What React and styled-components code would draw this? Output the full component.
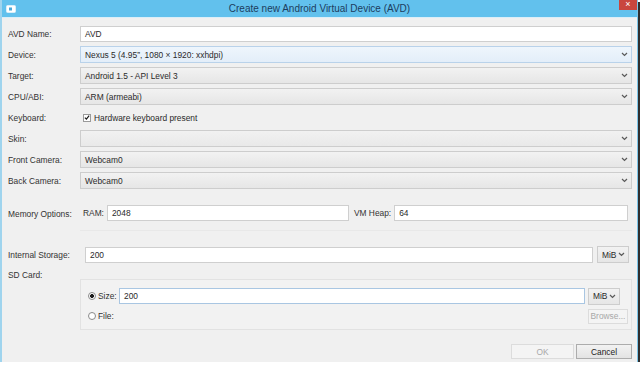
import React from 'react';
import styled, { createGlobalStyle, css } from 'styled-components';

// ---------------------------------------------------------------
// Global
// ---------------------------------------------------------------
const GlobalStyle = createGlobalStyle`
  html, body {
    margin: 0;
    padding: 0;
    background: #ffffff;
  }
  body {
    font-family: "Liberation Sans", Arial, sans-serif;
    font-size: 8.4px;
    color: #2e2e2e;
  }
`;

const Chevron = () => (
  <svg width="7" height="5" viewBox="0 0 7 5">
    <path d="M1 1 L3.5 3.5 L6 1" fill="none" stroke="#5a5a5a" strokeWidth="1.2" />
  </svg>
);

const AppIcon = () => (
  <svg width="10" height="8" viewBox="0 0 10 8">
    <rect x="0.5" y="0.5" width="9" height="7" rx="1" fill="#ffffff" stroke="#d9eef9" />
    <rect x="3" y="2.5" width="3" height="3" fill="#4aa8d8" />
  </svg>
);

const Select = ({ value, focused, disabled, width }) => (
  <SelectBox $focused={focused} $disabled={disabled} $width={width}>
    <span>{value}</span>
    <Chevron />
  </SelectBox>
);

const App = () => {
  return (
    <>
      <GlobalStyle />
      <Window>
        <TitleBar>
          <IconSlot>
            <AppIcon />
          </IconSlot>
          <Title>Create new Android Virtual Device (AVD)</Title>
          <CloseButton>×</CloseButton>
        </TitleBar>

        <Body>
          <Rows>
            <Row>
              <Label>AVD Name:</Label>
              <TextInput>AVD</TextInput>
            </Row>
            <Row>
              <Label>Device:</Label>
              <Select value="Nexus 5 (4.95”, 1080 × 1920: xxhdpi)" focused />
            </Row>
            <Row>
              <Label>Target:</Label>
              <Select value="Android 1.5 - API Level 3" />
            </Row>
            <Row>
              <Label>CPU/ABI:</Label>
              <Select value="ARM (armeabi)" />
            </Row>
            <Row>
              <Label>Keyboard:</Label>
              <Check>
                <CheckBox>
                  <svg width="7" height="7" viewBox="0 0 7 7">
                    <path d="M1 3.6 L2.8 5.4 L6 1.2" fill="none" stroke="#1c1c1c" strokeWidth="1.4" />
                  </svg>
                </CheckBox>
                Hardware keyboard present
              </Check>
            </Row>
            <Row>
              <Label>Skin:</Label>
              <Select value="" disabled />
            </Row>
            <Row>
              <Label>Front Camera:</Label>
              <Select value="Webcam0" />
            </Row>
            <Row>
              <Label>Back Camera:</Label>
              <Select value="Webcam0" />
            </Row>
          </Rows>

          <MemoryRow>
            <Label>Memory Options:</Label>
            <Panel>
              <InlineLabel>RAM:</InlineLabel>
              <TextInput $width="242px">2048</TextInput>
              <InlineLabel $gap="5px">VM Heap:</InlineLabel>
              <TextInput>64</TextInput>
            </Panel>
          </MemoryRow>

          <StorageRow>
            <Label>Internal Storage:</Label>
            <Inline>
              <TextInput>200</TextInput>
              <Select value="MiB" width="32px" />
            </Inline>
          </StorageRow>

          <SdRow>
            <Label $top>SD Card:</Label>
            <GroupBox>
              <GroupLine>
                <Radio $checked />
                <RadioLabel>Size:</RadioLabel>
                <TextInput $focused>200</TextInput>
                <Select value="MiB" width="32px" />
                <Spacer />
              </GroupLine>
              <GroupLine>
                <Radio />
                <RadioLabel>File:</RadioLabel>
                <FileFill />
                <Button $disabled $width="40px">Browse...</Button>
              </GroupLine>
            </GroupBox>
          </SdRow>

          <Footer>
            <Button $disabled $width="63px">OK</Button>
            <Button $width="56px">Cancel</Button>
          </Footer>
        </Body>
      </Window>
    </>
  );
};

// ---------------------------------------------------------------
// Styled Components
// ---------------------------------------------------------------
const Window = styled.div`
  width: 638px;
  height: 362px;
  box-sizing: border-box;
  background: #f0f0f0;
  border-left: 2px solid #9fd4ee;
  border-right: 1px solid #7cc6ea;
  box-shadow: 2px 2px 0 #2f2f2f;
  display: flex;
  flex-direction: column;
  overflow: hidden;
`;

const TitleBar = styled.div`
  height: 17px;
  flex: none;
  background: #62c1ed;
  display: flex;
  align-items: center;
  position: relative;
  border-bottom: 1px solid #dbeef8;
`;

const IconSlot = styled.div`
  width: 10px;
  height: 8px;
  margin-left: 4px;
  display: flex;
`;

const Title = styled.div`
  flex: 1;
  text-align: center;
  font-size: 10px;
  color: #1d3d5e;
  padding-right: 14px;
`;

const CloseButton = styled.div`
  position: absolute;
  right: 0;
  top: 0;
  width: 18px;
  height: 10px;
  background: #c9463e;
  color: #ffffff;
  font-size: 9px;
  line-height: 9px;
  text-align: center;
`;

const Body = styled.div`
  flex: 1;
  padding: 7px 5px 0 6px;
  display: flex;
  flex-direction: column;
`;

const Rows = styled.div`
  display: flex;
  flex-direction: column;
  gap: 4px;
`;

const rowGrid = css`
  display: grid;
  grid-template-columns: 72px 1fr;
  align-items: center;
`;

const Row = styled.div`
  ${rowGrid};
  height: 17px;
`;

const Label = styled.div`
  white-space: nowrap;
  color: #333333;
  ${(p) => p.$top && 'align-self: start; line-height: 17px;'}
`;

const TextInput = styled.div`
  height: 16px;
  box-sizing: border-box;
  flex: ${(p) => (p.$width ? `none` : '1')};
  width: ${(p) => p.$width || 'auto'};
  background: #ffffff;
  border: 1px solid ${(p) => (p.$focused ? '#a9c6e2' : '#cfcfcf')};
  padding: 0 4px;
  display: flex;
  align-items: center;
  color: #2a2a2a;
`;

const SelectBox = styled.div`
  height: 17px;
  box-sizing: border-box;
  flex: ${(p) => (p.$width ? 'none' : '1')};
  width: ${(p) => p.$width || 'auto'};
  border: 1px solid ${(p) => (p.$focused ? '#b9d2ea' : '#cdcdcd')};
  background: ${(p) =>
    p.$focused
      ? 'linear-gradient(#eef5fc, #e3eef9)'
      : p.$disabled
      ? 'linear-gradient(#f1f1f1, #e9e9e9)'
      : 'linear-gradient(#f2f2f2, #e6e6e6)'};
  display: flex;
  align-items: center;
  justify-content: space-between;
  padding: 0 3px 0 4px;
  color: #2a2a2a;
  white-space: nowrap;
`;

const Check = styled.div`
  display: flex;
  align-items: center;
  gap: 3px;
  padding-left: 3px;
  color: #2a2a2a;
`;

const CheckBox = styled.div`
  width: 8px;
  height: 8px;
  box-sizing: border-box;
  border: 1px solid #9a9a9a;
  background: #ffffff;
  display: flex;
  align-items: center;
  justify-content: center;
`;

const MemoryRow = styled.div`
  ${rowGrid};
  margin-top: 8px;
`;

const Panel = styled.div`
  display: flex;
  align-items: center;
  padding: 8px 4px 9px 3px;
  border-bottom: 1px solid #e8e8e8;
`;

const InlineLabel = styled.span`
  white-space: nowrap;
  padding-left: ${(p) => p.$gap || '0'};
  padding-right: 3px;
  color: #333333;
`;

const StorageRow = styled.div`
  ${rowGrid};
  margin-top: 15px;
`;

const Inline = styled.div`
  display: flex;
  align-items: center;
  gap: 4px;
  padding: 0 3px 0 5px;
`;

const SdRow = styled.div`
  ${rowGrid};
  align-items: start;
  margin-top: 4px;
`;

const GroupBox = styled.div`
  margin-top: 12px;
  border: 1px solid #e2e2e2;
  background: #f2f2f2;
  padding: 8px 3px 5px 7px;
  display: flex;
  flex-direction: column;
  gap: 4px;
`;

const GroupLine = styled.div`
  display: flex;
  align-items: center;
  gap: 3px;
  height: 16px;
`;

const Radio = styled.div`
  width: 8px;
  height: 8px;
  box-sizing: border-box;
  border-radius: 50%;
  border: 1px solid #8a8a8a;
  background: ${(p) =>
    p.$checked ? 'radial-gradient(circle, #1c1c1c 0 1.8px, #ffffff 2.2px)' : '#ffffff'};
  flex: none;
`;

const RadioLabel = styled.span`
  width: 18px;
  margin-left: -1px;
  color: #333333;
`;

const Spacer = styled.div`
  width: 5px;
`;

const FileFill = styled.div`
  flex: 1;
`;

const Button = styled.div`
  width: ${(p) => p.$width};
  height: 15px;
  box-sizing: border-box;
  border: 1px solid ${(p) => (p.$disabled ? '#dcdcdc' : '#acacac')};
  background: ${(p) => (p.$disabled ? '#f4f4f4' : 'linear-gradient(#f2f2f2, #e3e3e3)')};
  color: ${(p) => (p.$disabled ? '#a8a8a8' : '#222222')};
  display: flex;
  align-items: center;
  justify-content: center;
  white-space: nowrap;
`;

const Footer = styled.div`
  display: flex;
  justify-content: flex-end;
  gap: 2px;
  margin-top: auto;
  margin-bottom: 3px;
`;

export default App;
